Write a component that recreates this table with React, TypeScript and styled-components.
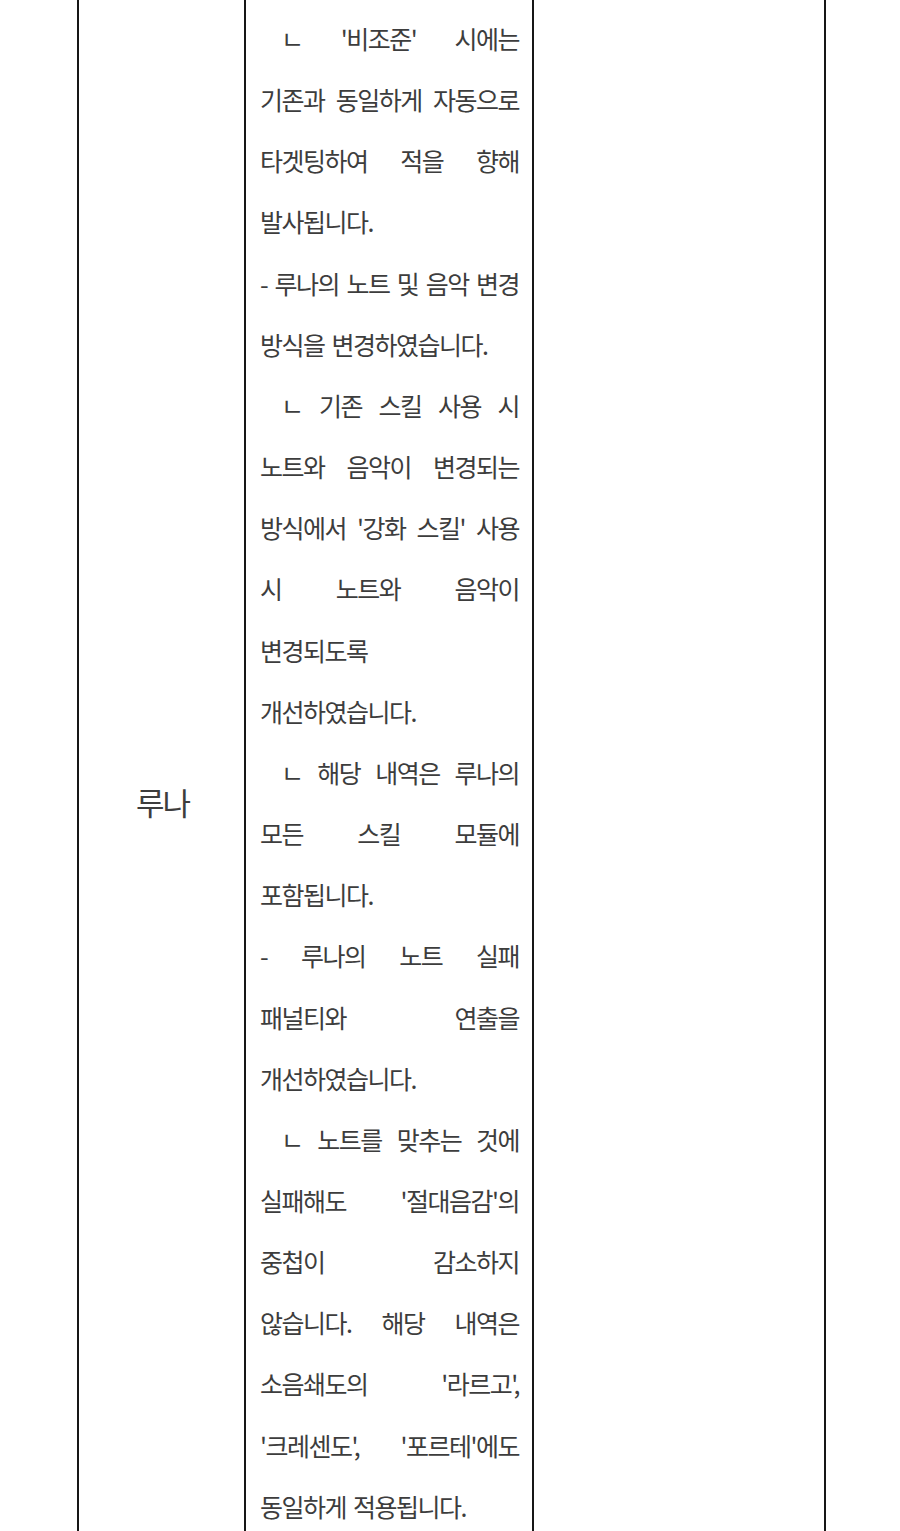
import styled, { createGlobalStyle } from 'styled-components';

const GlobalStyle = createGlobalStyle`
  html, body {
    margin: 0;
    padding: 0;
    background: #ffffff;
  }
  body {
    height: 1531px;
    overflow: hidden;
    font-family: 'Noto Sans CJK KR', 'Noto Sans', sans-serif;
    color: #3d3d3d;
  }
`;

type LineData = {
  text: string;
  indent?: boolean;
  end?: boolean; // 문단 끝 / 한 단어 줄은 왼쪽 정렬
};

const lines: LineData[] = [
  { text: "ㄴ '비조준' 시에는", indent: true },
  { text: '기존과 동일하게 자동으로' },
  { text: '타겟팅하여 적을 향해' },
  { text: '발사됩니다.', end: true },
  { text: '- 루나의 노트 및 음악 변경' },
  { text: '방식을 변경하였습니다.', end: true },
  { text: 'ㄴ 기존 스킬 사용 시', indent: true },
  { text: '노트와 음악이 변경되는' },
  { text: "방식에서 '강화 스킬' 사용" },
  { text: '시 노트와 음악이' },
  { text: '변경되도록', end: true },
  { text: '개선하였습니다.', end: true },
  { text: 'ㄴ 해당 내역은 루나의', indent: true },
  { text: '모든 스킬 모듈에' },
  { text: '포함됩니다.', end: true },
  { text: '- 루나의 노트 실패' },
  { text: '패널티와 연출을' },
  { text: '개선하였습니다.', end: true },
  { text: 'ㄴ 노트를 맞추는 것에', indent: true },
  { text: "실패해도 '절대음감'의" },
  { text: '중첩이 감소하지' },
  { text: '않습니다. 해당 내역은' },
  { text: "소음쇄도의 '라르고'," },
  { text: "'크레센도', '포르테'에도" },
  { text: '동일하게 적용됩니다.', end: true },
];

export default function App() {
  return (
    <>
      <GlobalStyle />
      <Table>
        <NameCell>
          <Name>루나</Name>
        </NameCell>

        <NoteCell>
          {lines.map((line, idx) => (
            <Line key={idx} $indent={line.indent} $end={line.end}>
              {line.text}
            </Line>
          ))}
        </NoteCell>

        <EmptyCell />
      </Table>
    </>
  );
}

const Table = styled.div`
  display: flex;
  margin-left: 77px;
  width: 749px;
  height: 1606px;
`;
//-----------------------------------------------------------
const Cell = styled.div`
  box-sizing: border-box;
  border-left: 2px solid #161616;
`;

const NameCell = styled(Cell)`
  width: 167px;
  display: flex;
  align-items: center;
  justify-content: center;
`;

const Name = styled.span`
  font-size: 31px;
  letter-spacing: -2px;
  padding-left: 2px;
  margin-top: -3px;
`;

const NoteCell = styled(Cell)`
  width: 288px;
  padding: 8px 13px 0 14px;
`;

const EmptyCell = styled(Cell)`
  width: 294px;
  border-right: 2px solid #161616;
`;
// ------------------------------------------------------

const Line = styled.div<{ $indent?: boolean; $end?: boolean }>`
  font-size: 25px;
  line-height: 61.15px;
  letter-spacing: -1.5px;
  word-spacing: ${({ $end }) => ($end ? '3px' : '-1px')};
  white-space: nowrap;
  text-indent: ${({ $indent }) => ($indent ? '21px' : '0')};
  text-align: ${({ $end }) => ($end ? 'left' : 'justify')};
  text-align-last: ${({ $end }) => ($end ? 'left' : 'justify')};
`;
